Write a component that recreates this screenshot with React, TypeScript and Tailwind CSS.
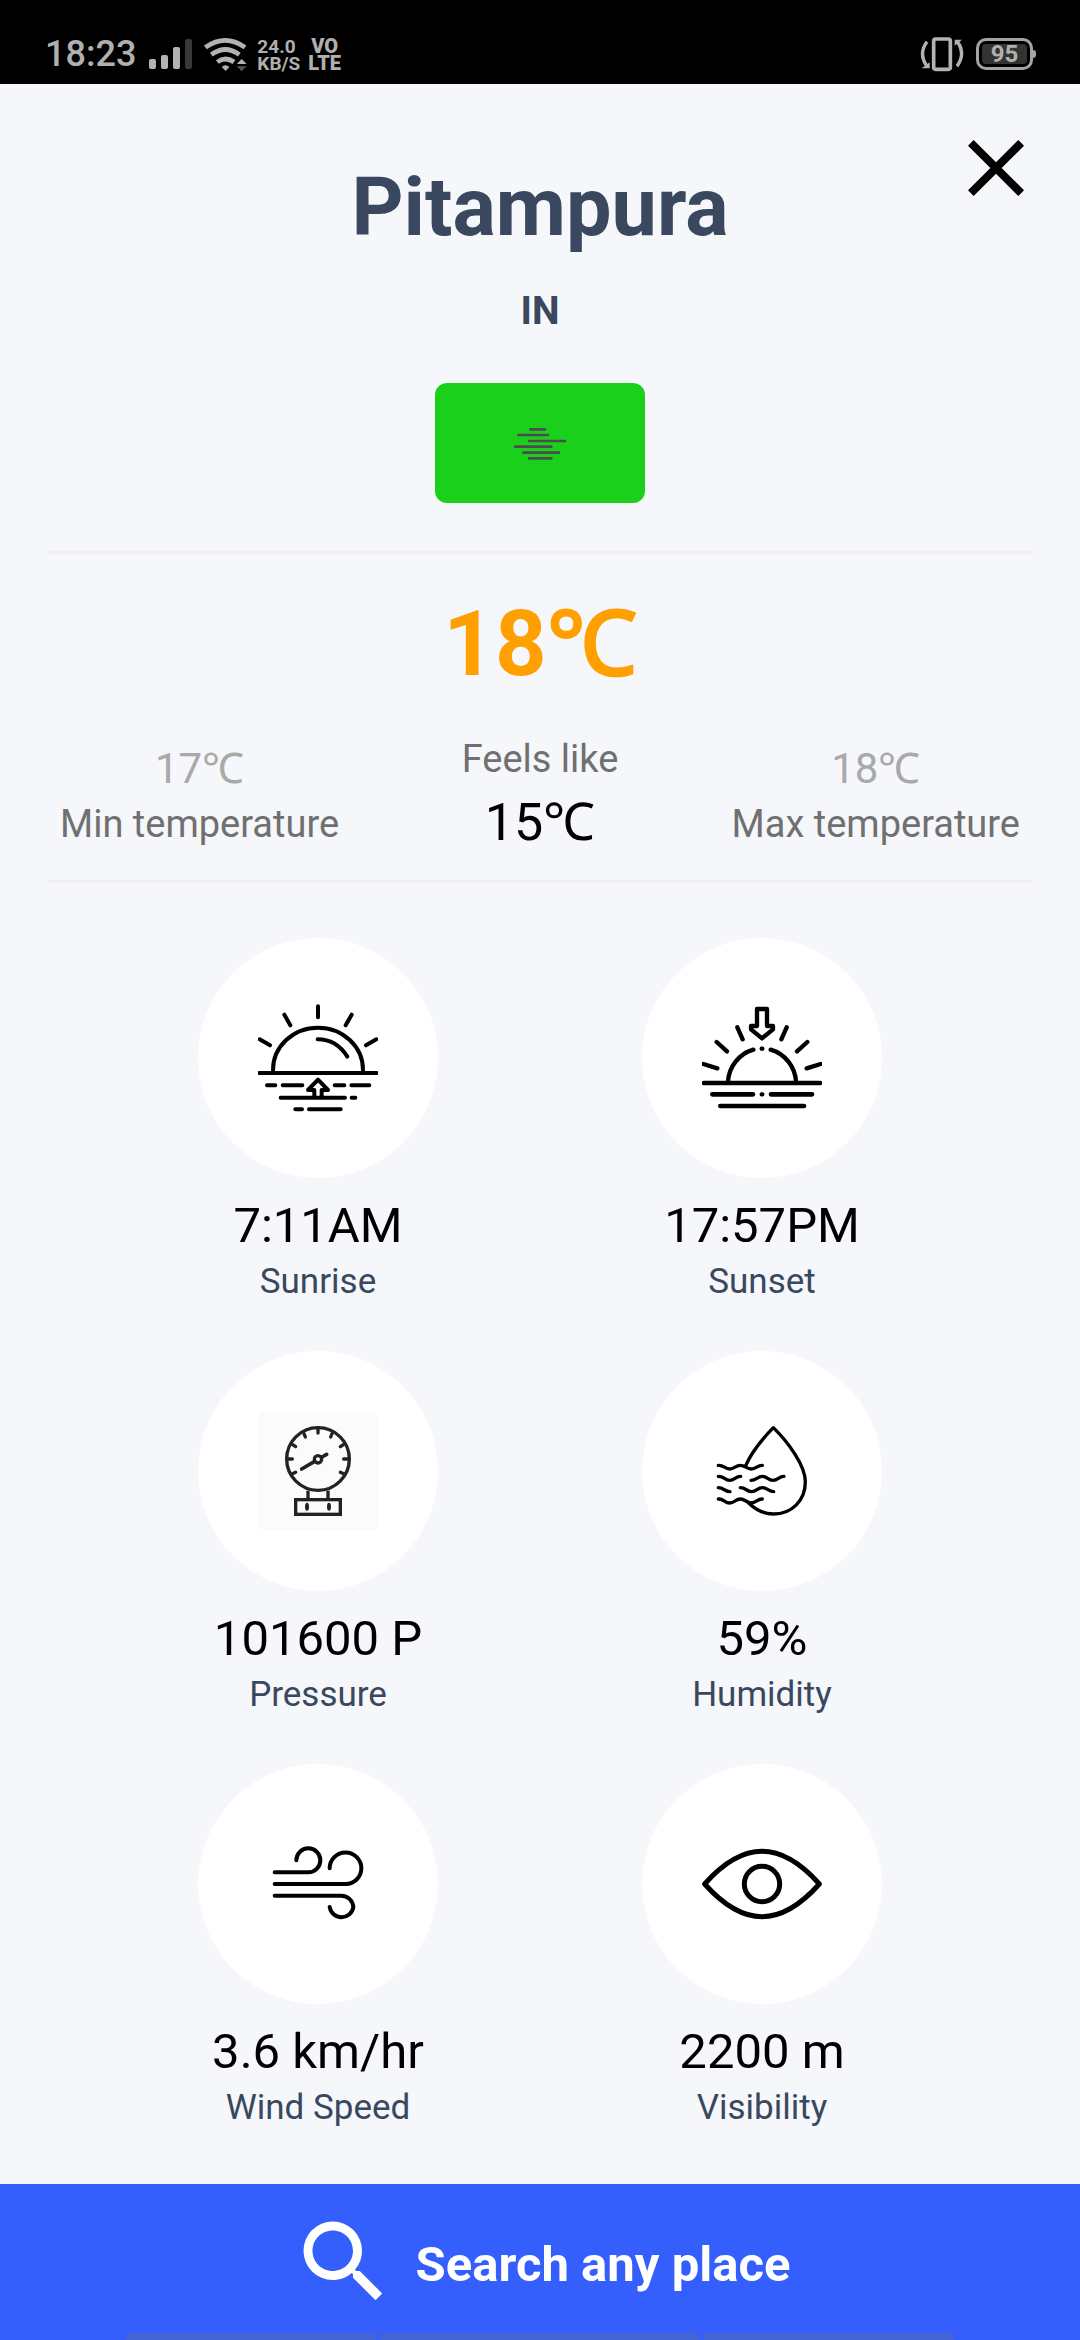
import type { ReactNode } from "react";
import { MdClose, MdSearch } from "react-icons/md";

function StatusBar() {
  return (
    <header className="flex h-[84px] items-end justify-between bg-black pr-11 pb-3 pl-[45px] text-[#b0b0b0]">
      <div className="flex items-end">
        <span className="text-[36px] leading-[36px] font-medium">18:23</span>
        <svg viewBox="148 36 46 36" className="ml-3 h-9 w-[46px]" fill="#b3b3b3" aria-hidden="true">
          <rect x="149" y="59" width="7" height="10" rx="2" />
          <rect x="161" y="55" width="7" height="14" rx="2" />
          <rect x="173" y="47" width="7" height="22" rx="2" />
          <rect x="185" y="39" width="7" height="30" rx="2" fill="#383838" />
        </svg>
        <svg viewBox="609 108 135 108" className="ml-[9px] h-9 w-[45px]" fill="none" stroke="#b3b3b3" strokeWidth="14" aria-hidden="true">
          <path d="M616 142Q676 100 735 142" />
          <path d="M634 164Q676 133 718 164" />
          <path d="M652 186Q676 168 702 186" />
          <path d="M665 201Q676 190 688 201L677 213Z" fill="#b3b3b3" stroke="none" />
          <path d="M710 192L725 177L740 192Z" fill="#b3b3b3" stroke="none" />
          <path d="M710 199H740L725 214Z" fill="#555" stroke="none" />
        </svg>
        <span className="ml-[9px] text-[19px] leading-[17px] font-bold">
          24.0
          <br />
          KB/S
        </span>
        <span className="ml-2 text-center text-[20px] leading-[17px] font-black">
          VO
          <br />
          LTE
        </span>
      </div>
      <div className="flex items-end gap-3">
        <svg viewBox="117 108 132 108" className="h-9 w-11" fill="none" stroke="#b3b3b3" strokeWidth="10" aria-hidden="true">
          <rect x="158" y="117" width="50" height="91" rx="6" strokeWidth="11" />
          <path d="M138 125Q112 160 136 196" />
          <path d="M146 187V205H122Z" fill="#b3b3b3" stroke="none" />
          <path d="M228 199Q254 163 231 127" />
          <path d="M221 137V119H243Z" fill="#b3b3b3" stroke="none" />
        </svg>
        <div className="flex items-center pb-0.5">
          <div className="flex h-8 w-[57px] items-center justify-center rounded-[10px] border-3 border-[#a3a3a3] p-[3px]">
            <span className="flex h-5 w-full items-center justify-center rounded bg-[#333] text-[24px] leading-5 font-bold">95</span>
          </div>
          <span className="h-2 w-[3px] rounded-r bg-[#a3a3a3]" />
        </div>
      </div>
    </header>
  );
}

function MistIcon() {
  return (
    <svg viewBox="510 833 180 150" className="h-[50px] w-[60px]" fill="none" stroke="#4d4b50" strokeWidth="8" strokeLinecap="round" aria-hidden="true">
      <path d="M571 867H615M535 884H624M567 902H675M526 919H634M550 937H657M567 954H634" />
    </svg>
  );
}

function SunriseIcon() {
  return (
    <svg viewBox="204 204 360 360" className="size-[120px]" fill="none" stroke="#000" strokeWidth="12" strokeLinecap="round" strokeLinejoin="round" aria-hidden="true">
      <path d="M384 229V262M283 254L301 286M485 254L467 286M209 328L240 346M559 328L528 346" />
      <path d="M249 425V420A135 127 0 0 1 519 420V425" />
      <path d="M383 328Q439 328 472 380" />
      <path d="M208 429H560" />
      <path d="M231 466H256M278 466H337M434 466H463M484 466H538M272 503H465M485 503H496M316 538H336M357 538H452" />
      <path d="M373 500V480H354L384 449L414 480H395V500" />
    </svg>
  );
}

function SunsetIcon() {
  return (
    <svg viewBox="216 204 360 360" className="size-[120px]" fill="none" stroke="#000" strokeWidth="13" strokeLinecap="round" strokeLinejoin="round" aria-hidden="true">
      <path d="M381 237H411V288H429V298L396 325L363 298V288H381Z" />
      <path d="M322 292L338 328M470 292L454 328M260 336L291 364M532 336L501 364M220 402L262 415M572 402L530 415" />
      <path d="M294 455A106 106 0 0 1 370 359M422 359A106 106 0 0 1 498 455" />
      <path d="M222 459H570M247 493H369M423 493H546M271 528H522" strokeWidth="14" />
      <path d="M395 356H397M395 493H397" />
    </svg>
  );
}

function PressureIcon() {
  return (
    <svg viewBox="204 213 360 360" className="size-[120px]" fill="none" stroke="#222" strokeWidth="10" strokeLinecap="round" aria-hidden="true">
      <defs>
        <pattern id="hatch" width="12" height="12" patternUnits="userSpaceOnUse">
          <path d="M-3 3L3 -3M0 12L12 0M9 15L15 9" stroke="#f3f3f3" strokeWidth="2.5" />
        </pattern>
      </defs>
      <rect x="207" y="216" width="354" height="354" fill="#fdfdfd" stroke="none" />
      <rect x="207" y="216" width="354" height="354" fill="url(#hatch)" stroke="none" />
      <circle cx="384" cy="357" r="94" />
      <path d="M384 266V279M342 281L346 291M426 281L422 291M308 314L317 320M460 314L451 320M294 357H307M461 357H474M306 402L317 397M462 402L451 397" />
      <circle cx="384" cy="358" r="11" />
      <path d="M374 364L335 387M396 351L410 343" strokeWidth="11" />
      <path d="M354 452V478M414 452V478" strokeLinecap="butt" />
      <rect x="317" y="479" width="134" height="44" />
      <ellipse cx="351" cy="500" rx="6" ry="12" fill="#222" stroke="none" />
      <ellipse cx="417" cy="500" rx="6" ry="12" fill="#222" stroke="none" />
    </svg>
  );
}

function HumidityIcon() {
  return (
    <svg viewBox="216 213 360 360" className="size-[120px]" fill="none" stroke="#000" strokeWidth="10" strokeLinecap="round" strokeLinejoin="round" aria-hidden="true">
      <path d="M347 377C362 343 394 300 430 263C476 308 526 378 526 425C526 481 486 522 430 522C403 522 378 510 356 489" />
      <path d="M265 376C282 375 284 387 299 387C314 387 316 376 331 376C346 376 349 387 364 387C379 387 382 375 397 376" />
      <path d="M265 409C282 408 284 421 299 421C314 421 317 408 332 409" />
      <path d="M363 421C379 421 382 409 397 409C412 409 414 421 429 421C444 421 447 408 462 409" />
      <path d="M265 443C281 443 285 455 300 455" />
      <path d="M331 443C348 443 350 455 365 455C380 455 382 443 397 443C412 443 416 455 431 455" />
      <path d="M265 477C282 476 284 489 299 489C314 489 316 477 331 477C346 477 349 489 364 489C379 489 382 476 397 477" />
    </svg>
  );
}

function WindIcon() {
  return (
    <svg viewBox="204 222 360 360" className="size-[120px]" fill="none" stroke="#000" strokeWidth="12" strokeLinecap="round" aria-hidden="true">
      <path d="M254 367H354A36 36 0 0 0 391 331A36 36 0 0 0 319 331" />
      <path d="M254 402H466A47 47 0 0 0 514 355A47 47 0 0 0 419 355" />
      <path d="M254 437H454A36 36 0 0 1 490 472A36 36 0 0 1 419 471" />
    </svg>
  );
}

function EyeIcon() {
  return (
    <svg viewBox="216 222 360 360" className="size-[120px]" fill="none" stroke="#000" strokeWidth="15" strokeLinejoin="round" aria-hidden="true">
      <path d="M224 402C282 337 342 304 396 304C450 304 510 337 568 402C510 467 450 500 396 500C342 500 282 467 224 402Z" />
      <circle cx="396" cy="402" r="53" />
    </svg>
  );
}

const metrics: { icon: ReactNode; value: string; label: string }[] = [
  { icon: <SunriseIcon />, value: "7:11AM", label: "Sunrise" },
  { icon: <SunsetIcon />, value: "17:57PM", label: "Sunset" },
  { icon: <PressureIcon />, value: "101600 P", label: "Pressure" },
  { icon: <HumidityIcon />, value: "59%", label: "Humidity" },
  { icon: <WindIcon />, value: "3.6 km/hr", label: "Wind Speed" },
  { icon: <EyeIcon />, value: "2200 m", label: "Visibility" },
];

function Divider() {
  return <hr className="mx-12 h-[3px] border-0 bg-[#f0f0f4]" />;
}

export default function App() {
  return (
    <div className="flex min-h-screen flex-col bg-[#f5f7fb] font-[Roboto,sans-serif] text-black">
      <StatusBar />
      <main className="flex flex-1 flex-col">
        <div className="grid grid-cols-[1fr_auto_1fr] px-9 pt-9">
          <h1 className="col-start-2 pt-10 text-[81px] leading-[96px] font-bold text-[#39485e]">Pitampura</h1>
          <button type="button" aria-label="Close" className="justify-self-end self-start">
            <MdClose className="size-24" />
          </button>
        </div>
        <p className="mt-[31px] text-center text-[39px] leading-[48px] font-bold text-[#39485e]">IN</p>
        <div className="mt-12 mb-12 flex h-[120px] w-[210px] items-center justify-center self-center rounded-xl bg-[#1bd01a]">
          <MistIcon />
        </div>
        <Divider />
        <p className="mt-[37px] text-center text-[90px] leading-[108px] font-bold text-[#ffa000]">18℃</p>
        <div className="mt-[38px] mb-[27px] grid grid-cols-[1fr_auto_1fr] items-center px-[60px] text-center text-[38px] leading-[44px] text-[#707070]">
          <div className="justify-self-start">
            <p className="mb-2 text-[42px] leading-[50px] text-[#a9a9a9]">17℃</p>
            <p>Min temperature</p>
          </div>
          <div>
            <p className="mb-3">Feels like</p>
            <p className="text-[52px] leading-[60px] text-black">15℃</p>
          </div>
          <div className="justify-self-end">
            <p className="mb-2 text-[42px] leading-[50px] text-[#a9a9a9]">18℃</p>
            <p>Max temperature</p>
          </div>
        </div>
        <Divider />
        <dl className="mt-[55px] mb-12 grid grid-cols-2 gap-y-[49px] px-24 text-center">
          {metrics.map((m) => (
            <div key={m.label} className="flex flex-col items-center">
              <div className="flex size-60 items-center justify-center rounded-full bg-white">{m.icon}</div>
              <dd className="mt-5 text-[49px] leading-[56px]">{m.value}</dd>
              <dt className="mt-2 text-[35px] leading-[40px] text-[#39485e]">{m.label}</dt>
            </div>
          ))}
        </dl>
      </main>
      <button type="button" className="flex h-[156px] flex-col bg-[#345ffd] text-white">
        <span className="flex w-full flex-1 items-center justify-center gap-[18px] pt-[7px] text-[49px] leading-[56px] font-bold">
          <MdSearch className="size-[108px]" />
          <span className="pt-1.5">Search any place</span>
        </span>
        <span className="grid h-[7px] w-full grid-cols-[250fr_319fr_250fr] gap-1 px-[126px]" aria-hidden="true">
          <span className="bg-[#4463d4]" />
          <span className="bg-[#4463d4]" />
          <span className="bg-[#4463d4]" />
        </span>
      </button>
    </div>
  );
}
